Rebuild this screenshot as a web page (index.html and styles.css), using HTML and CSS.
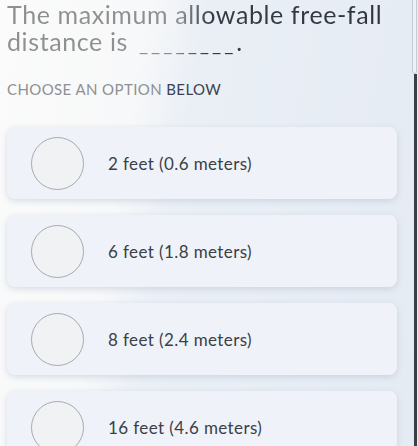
FILE: index.html
```html
<!DOCTYPE html>
<html lang="en">
<head>
  <meta charset="UTF-8">
  <meta name="viewport" content="width=device-width, initial-scale=1.0">
  <title>Question</title>
  <link rel="stylesheet" href="styles.css">
</head>
<body>
  <div class="scroll-thumb"></div>
  <div class="bezel"></div>

  <h1 class="question">The maximum allowable free-fall<br>distance is <span class="blank">________</span>.</h1>

  <p class="prompt">Choose an option <span class="strong">below</span></p>

  <div class="options">
    <div class="option">
      <span class="radio"></span>
      <span class="label">2 feet (0.6 meters)</span>
    </div>
    <div class="option">
      <span class="radio"></span>
      <span class="label">6 feet (1.8 meters)</span>
    </div>
    <div class="option">
      <span class="radio"></span>
      <span class="label">8 feet (2.4 meters)</span>
    </div>
    <div class="option">
      <span class="radio"></span>
      <span class="label">16 feet (4.6 meters)</span>
    </div>
  </div>
</body>
</html>
```

FILE: styles.css
```css
body {
  margin: 0;
  padding: 0 21px 0 7px;
  height: 446px;
  overflow: hidden;
  font-family: Lato, "Open Sans", sans-serif;
  color: #2c323d;
  background: linear-gradient(100deg, #fbfbfb 0%, #f7f8f9 30%, #eaeff6 42%, #e5ebf3 100%);
}
.question {
  margin: 0;
  padding-top: 1px;
  font-size: 25px;
  line-height: 27px;
  font-weight: 400;
  letter-spacing: 0.6px;
  white-space: nowrap;
  background: linear-gradient(100deg, #8e8f91 0%, #8e8f91 44%, #363b45 52%, #2f3540 100%);
  -webkit-background-clip: text;
  background-clip: text;
  color: transparent;
}
.blank {
  margin-left: 4px;
  font-size: 20px;
  letter-spacing: 3px;
}
.prompt {
  margin: 23px 0 0;
  font-size: 15px;
  text-transform: uppercase;
  letter-spacing: 0.4px;
  color: #8e9094;
}
.strong {
  color: #3a4250;
}
.options {
  display: flex;
  flex-direction: column;
  gap: 16px;
  margin-top: 29px;
}
.option {
  display: flex;
  align-items: center;
  height: 72px;
  padding-left: 24px;
  border-radius: 8px;
  background: #eff3f9;
  box-shadow: 0 2px 6px rgba(150, 165, 190, 0.35);
}
.radio {
  width: 51px;
  height: 51px;
  border: 1.5px solid #a6aab1;
  border-radius: 50%;
  background: #f1f2f4;
  flex: none;
}
.label {
  margin-left: 24px;
  font-size: 17px;
  letter-spacing: 0.4px;
  color: #3b3f46;
}
.scroll-thumb {
  position: absolute;
  top: -4px;
  left: 412px;
  width: 3px;
  height: 76px;
  border: 1px solid #c5ccd7;
  border-radius: 3px;
  background: #eef2f8;
}
.bezel {
  position: absolute;
  top: 74px;
  left: 414px;
  width: 3px;
  height: 372px;
  background: #3b3f47;
}
```
